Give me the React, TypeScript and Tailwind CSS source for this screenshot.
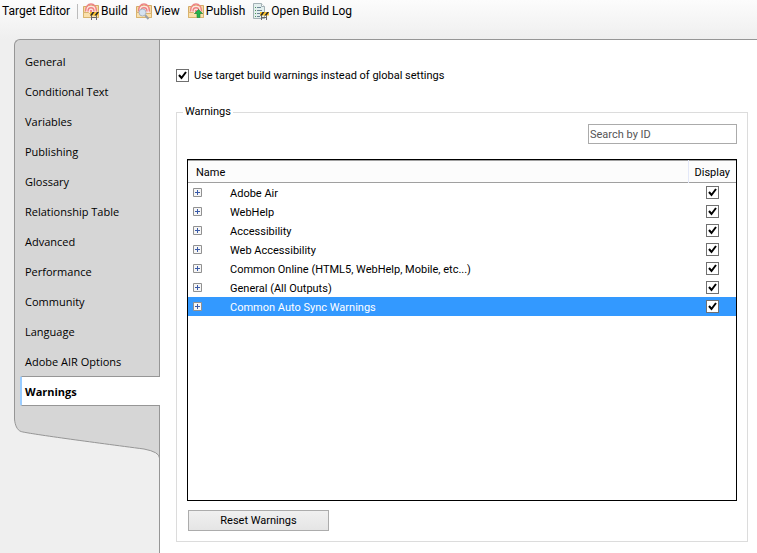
import React, { useState } from "react";

const tabs = [
  "General",
  "Conditional Text",
  "Variables",
  "Publishing",
  "Glossary",
  "Relationship Table",
  "Advanced",
  "Performance",
  "Community",
  "Language",
  "Adobe AIR Options",
  "Warnings",
];

const groups = [
  "Adobe Air",
  "WebHelp",
  "Accessibility",
  "Web Accessibility",
  "Common Online (HTML5, WebHelp, Mobile, etc...)",
  "General (All Outputs)",
  "Common Auto Sync Warnings",
];

function Folder() {
  return (
    <>
      <path d="M.5 4.500h4l1-1h10v12H.5z" fill="#f6dba4" stroke="#d3ab68" />
      <path d="M2.500 9.500a5.500 6 0 0 1 11 0v2h-11z" fill="#fde3df" />
      <path d="M2.500 9.500C2 -.5 14 -.5 13.500 9.500" fill="none" stroke="#ee8384" strokeWidth="1.400" />
      <path d="M5 9.500c0-5 6-5 6 0" fill="none" stroke="#ee8384" strokeWidth="1.400" />
      <circle cx="8" cy="9" r="1" fill="#e8696b" />
      <path d="M.5 15.500v-5h5l1 1h9v4z" fill="#fae0ac" stroke="#d9b46e" />
    </>
  );
}

function Barrier() {
  return (
    <>
      <path d="M8.500 12v6M13.500 12v6M8.500 15.500h5" stroke="#666" fill="none" />
      <path d="M7 10h9v3.500H7z" fill="#f8c12e" />
      <path d="m7 13.500 2.500-3.500h2L9 13.500zM11.500 13.500 14 10h2l-2.500 3.500z" fill="#2b2b2b" />
    </>
  );
}

function Icon({ children }: { children: React.ReactNode }) {
  return (
    <svg className="h-[18px] w-[17px] shrink-0" viewBox="0 0 17 18" aria-hidden="true">
      {children}
    </svg>
  );
}

const tools = [
  { label: "Build", icon: <><Folder /><Barrier /></> },
  {
    label: "View",
    icon: (
      <>
        <Folder />
        <path d="m9 13 3.500 4" stroke="#9a9fa8" strokeWidth="2" />
        <circle cx="6.500" cy="10.500" r="3.500" fill="#d5e2f1" stroke="#aab4c2" />
      </>
    ),
  },
  {
    label: "Publish",
    icon: (
      <>
        <Folder />
        <path d="m10.500 7.500 4 4H12v4H9v-4H6.500z" fill="#25b34b" stroke="#15873a" strokeWidth=".6" />
      </>
    ),
  },
  {
    label: "Open Build Log",
    icon: (
      <>
        <path d="M.5 1.500h8l3 3v12H.5z" fill="#e3efee" stroke="#a3b1b5" />
        <path d="M8.500 1.500v3h3" fill="#fff" stroke="#a3b1b5" />
        <path d="M2 5.500h1M2 8.500h1M2 11.500h1M2 14.500h1" stroke="#4c9a58" />
        <path d="M4 5.500h4M4 8.500h5M4 11.500h4M4 14.500h3" stroke="#6d8697" />
        <Barrier />
      </>
    ),
  },
];

function Check({ id, label }: { id: string; label: string }) {
  const [on, setOn] = useState(true);
  return (
    <span className="inline-grid size-[13px] shrink-0">
      <input
        id={id}
        type="checkbox"
        aria-label={label}
        checked={on}
        onChange={() => setOn(!on)}
        className="peer col-start-1 row-start-1 size-[13px] appearance-none border border-[#707070] bg-white"
      />
      <svg className="pointer-events-none invisible col-start-1 row-start-1 size-[13px] peer-checked:visible" viewBox="0 0 13 13" aria-hidden="true">
        <path d="m3 6 2.500 3L10 3" fill="none" stroke="#000" strokeWidth="2" />
      </svg>
    </span>
  );
}

export default function App() {
  const [active, setActive] = useState("Warnings");
  const [selected, setSelected] = useState("Common Auto Sync Warnings");

  return (
    <div className="flex min-h-screen flex-col bg-[#efefef] font-[Roboto,sans-serif] text-[11px] leading-4 text-black">
      <header className="flex h-[39px] items-start bg-linear-to-b from-[#fcfcfc] to-[#efefef] pt-[2px] pl-[2px] text-[12px] leading-[18px]">
        <span className="pr-[7px]">Target Editor</span>
        <span className="mt-[2px] mr-[5px] h-[15px] w-px bg-[#bcbcbc]" />
        <div className="flex gap-[8px]">
          {tools.map((tool) => (
            <button key={tool.label} type="button" className="flex items-center gap-px whitespace-nowrap">
              <Icon>{tool.icon}</Icon>
              {tool.label}
            </button>
          ))}
        </div>
      </header>

      <div className="flex grow">
        <aside className="flex w-[160px] shrink-0 flex-col pl-[14px] font-['Open_Sans',sans-serif]">
          <nav className="rounded-tl-md border-t border-l border-[#969696] bg-[#d6d6d6]">
            <div className="h-[6px] border-r border-[#969696]" />
            {tabs.map((tab) =>
              tab === active ? (
                <div key={tab} className="flex h-[30px] pl-[5px]">
                  <button
                    type="button"
                    aria-current="page"
                    className="grow rounded-l-xs border-y border-l-2 border-y-[#969696] border-l-[#99ccff] bg-white pt-[2px] pl-[3px] text-left font-bold"
                  >
                    {tab}
                  </button>
                </div>
              ) : (
                <div key={tab} className="flex h-[30px] border-r border-[#969696]">
                  <button type="button" onClick={() => setActive(tab)} className="grow pt-[2px] pl-[10px] text-left">
                    {tab}
                  </button>
                </div>
              ),
            )}
          </nav>
          <svg className="h-[52px] w-[146px] shrink-0" viewBox="0 0 146 52" aria-hidden="true">
            <path
              d="M.5 0v13C1 19 3 24 7 25.500C13 27.500 80 36.500 130 43Q145.500 46 145.500 52V0"
              fill="#d6d6d6"
            />
            <path
              d="M.5 0v13C1 19 3 24 7 25.500C13 27.500 80 36.500 130 43Q145.500 46 145.500 52V0"
              fill="none"
              stroke="#969696"
            />
          </svg>
          <div className="grow border-r border-[#969696]" />
        </aside>

        <main className="flex min-w-0 grow flex-col border-t border-[#969696] bg-white pt-[27px] pr-[9px] pb-[11px] pl-[16px]">
          <div className="flex h-4 items-center gap-[5px]">
            <Check id="override" label="Use target build warnings instead of global settings" />
            <label htmlFor="override" className="pt-[2px]">Use target build warnings instead of global settings</label>
          </div>

          <fieldset className="mt-[21px] flex min-w-0 grow flex-col border border-[#dcdcdc] px-[10px] pb-[10px]">
            <legend className="ml-[-4px] px-[2px]">Warnings</legend>
            <input
              type="search"
              aria-label="Search by ID"
              placeholder="Search by ID"
              className="mt-[4px] h-[20px] w-[149px] self-end border border-[#ababab] pl-px placeholder:text-[#555]"
            />
            <div className="mt-[15px] grow border border-black">
              <table className="w-full border-collapse">
                <thead>
                  <tr className="h-[22px] border-t border-b border-[#a0a0a0] bg-[#fcfcfc]">
                    <th className="border-r border-[#e3e8f8] pt-[2px] pl-[8px] text-left font-normal" colSpan={2}>
                      Name
                    </th>
                    <th className="w-[48px] pt-[2px] text-center font-normal">Display</th>
                  </tr>
                </thead>
                <tbody>
                  {groups.map((group) => (
                    <tr
                      key={group}
                      onClick={() => setSelected(group)}
                      className={group === selected ? "h-[19px] bg-[#3399ff] text-white" : "h-[19px]"}
                    >
                      <td className="w-[42px] pl-[5px]">
                        <button type="button" aria-label={`Expand ${group}`} className="block size-[9px]">
                          <svg className="size-[9px]" viewBox="0 0 9 9" aria-hidden="true">
                            <path d="M.5.5h8v8h-8z" fill="#f6f6f6" stroke="#919191" />
                            <path d="M2 4.500h5M4.500 2v5" stroke="#3a5aa8" />
                          </svg>
                        </button>
                      </td>
                      <td className="pt-[3px]">{group}</td>
                      <td className="text-center">
                        <div className="flex justify-center">
                          <Check id={group} label={`Display ${group}`} />
                        </div>
                      </td>
                    </tr>
                  ))}
                </tbody>
              </table>
            </div>
            <button
              type="button"
              className="mt-[9px] ml-px h-[21px] w-[141px] border border-[#acacac] bg-linear-to-b from-[#f0f0f0] to-[#e5e5e5]"
            >
              Reset Warnings
            </button>
          </fieldset>
        </main>
      </div>
    </div>
  );
}
